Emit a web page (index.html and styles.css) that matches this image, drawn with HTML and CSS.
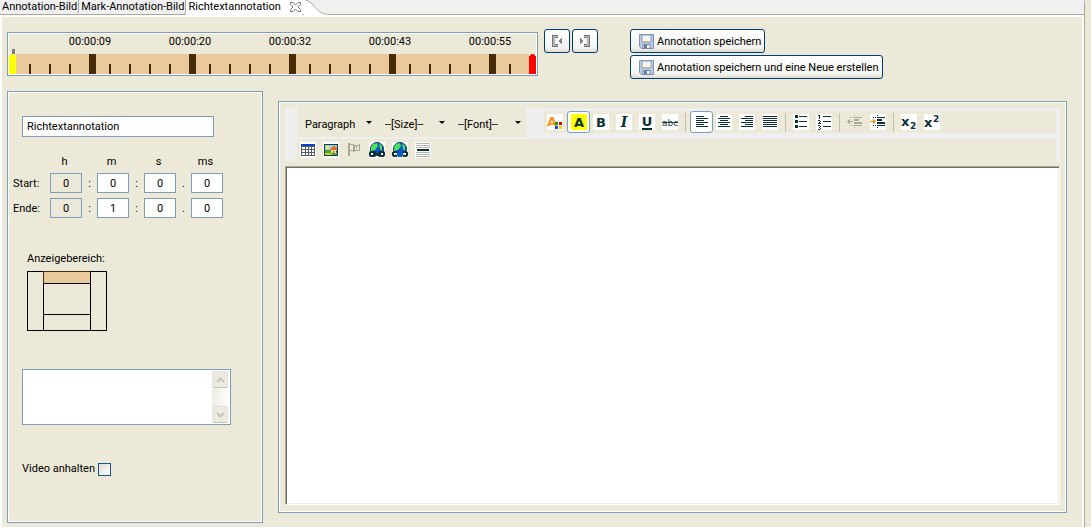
FILE: index.html
```html
<!DOCTYPE html>
<html lang="de">
<head>
<meta charset="utf-8">
<title>Richtextannotation</title>
<link rel="stylesheet" href="styles.css">
</head>
<body>
<div class="window">
<div class="view">
  <nav class="tabs">
    <button class="tab" type="button">Annotation-Bild</button>
    <button class="tab" type="button">Mark-Annotation-Bild</button>
    <button class="tab tab-active" type="button">Richtextannotation
      <svg class="tab-close" width="11" height="10" viewBox="0 0 11 10"><path d="M.5.5h2.500l2.500 2.500L8 .5h2.500v2L8 5l2.500 2.500v2H8L5.500 7 3 9.500H.5v-2L3 5 .5 2.500z" fill="#fff" stroke="#77756a"/></svg>
    </button>
    <svg class="tab-curve" width="28" height="15" viewBox="0 0 28 15"><path d="M0 0h2C10 2 12 14 26 14h2v1H0z" fill="#fff"/><path d="M1 0C10 1 12 14 24 14.500h4" fill="none" stroke="#aca899"/></svg>
  </nav>

  <main class="content">
    <div class="top">
      <div class="timeline">
        <div class="times"><span>00:00:09</span><span>00:00:20</span><span>00:00:32</span><span>00:00:43</span><span>00:00:55</span></div>
        <svg class="ruler" width="527" height="25" viewBox="0 0 527 25" shape-rendering="crispEdges">
          <path d="M0 5h527v20H0z" fill="#eac99a"/>
          <path d="M80 5h7v20h-7zM180 5h7v20h-7zM280 5h7v20h-7zM380 5h7v20h-7zM480 5h7v20h-7z" fill="#472a08"/>
          <path d="M21 15v10M41 15v10M61 15v10M101 15v10M121 15v10M141 15v10M161 15v10M201 15v10M221 15v10M241 15v10M261 15v10M301 15v10M321 15v10M341 15v10M361 15v10M401 15v10M421 15v10M441 15v10M461 15v10M501 15v10" stroke="#472a08" stroke-width="2"/>
          <path d="M0 5h7v20H0z" fill="#ece9d8"/><path d="M3 0h3v5H3z" fill="#808080"/>
          <path d="M0 25V7h1V6h1V5h3v1h1v1h1v18z" fill="#ff0"/>
          <path d="M520 5h7v2h-7z" fill="#ece9d8"/><path d="M520 25V7h1V6h1V5h3v1h1v1h1v18z" fill="#f00"/>
        </svg>
      </div>
      <div class="marks">
        <button class="btn btn-mark" type="button" aria-label="Start setzen"><svg width="12" height="14" viewBox="0 0 12 14" shape-rendering="crispEdges"><path d="M1 1h6v12H1z" fill="#b4b4b4"/><path d="M4 4h3v6H4z" fill="#f6f6f3"/><path d="M7 1.500H1.500v11H7M7 3.500H4M7 10.500H4" fill="none" stroke="#777"/><path d="M10 4h1v6h-1zM9 5h1v4H9zM8 6h1v2H8z" fill="#808080"/></svg></button>
        <button class="btn btn-mark" type="button" aria-label="Ende setzen"><svg width="12" height="14" viewBox="0 0 12 14" shape-rendering="crispEdges"><path d="M5 1h6v12H5z" fill="#b4b4b4"/><path d="M5 4h3v6H5z" fill="#f6f6f3"/><path d="M5 1.500h5.500v11H5M5 3.500h3M5 10.500h3" fill="none" stroke="#777"/><path d="M1 4h1v6H1zM2 5h1v4H2zM3 6h1v2H3z" fill="#808080"/></svg></button>
      </div>
      <div class="saves">
        <button class="btn btn-save" type="button"><svg width="15" height="15" viewBox="0 0 15 15"><path d="M.5.5h14v14h-12l-2-2z" fill="#b9cae8" stroke="#7d92b4"/><path d="M3 1h9v7H3z" fill="#f3f6f3" stroke="#8e9fb0"/><path d="M4 7.500h7M4 14.500v-4h7v4z" fill="#f4f4f0" stroke="#7889a4"/><path d="M4 7.500h7" stroke="#d8bd75"/><path d="M5 11h3v3H5z" fill="#667b9d"/></svg><span>Annotation speichern</span></button>
        <button class="btn btn-save" type="button"><svg width="15" height="15" viewBox="0 0 15 15"><path d="M.5.5h14v14h-12l-2-2z" fill="#b9cae8" stroke="#7d92b4"/><path d="M3 1h9v7H3z" fill="#f3f6f3" stroke="#8e9fb0"/><path d="M4 7.500h7M4 14.500v-4h7v4z" fill="#f4f4f0" stroke="#7889a4"/><path d="M4 7.500h7" stroke="#d8bd75"/><path d="M5 11h3v3H5z" fill="#667b9d"/></svg><span>Annotation speichern und eine Neue erstellen</span></button>
      </div>
    </div>

    <div class="panels">
      <form class="panel side">
        <input class="field title" type="text" value="Richtextannotation" aria-label="Titel">
        <div class="time-grid">
          <span></span><span class="unit">h</span><span></span><span class="unit">m</span><span></span><span class="unit">s</span><span></span><span class="unit">ms</span>
          <label for="start-h">Start:</label><input id="start-h" class="field num" value="0" disabled><span class="sep">:</span><input class="field num" value="0" aria-label="Start m"><span class="sep">:</span><input class="field num" value="0" aria-label="Start s"><span class="sep">.</span><input class="field num" value="0" aria-label="Start ms">
          <label for="end-h">Ende:</label><input id="end-h" class="field num" value="0" disabled><span class="sep">:</span><input class="field num" value="1" aria-label="Ende m"><span class="sep">:</span><input class="field num" value="0" aria-label="Ende s"><span class="sep">.</span><input class="field num" value="0" aria-label="Ende ms">
        </div>
        <div class="area">
          <span>Anzeigebereich:</span>
          <svg width="80" height="60" viewBox="0 0 80 60" shape-rendering="crispEdges"><path d="M.5.5h79v59H.5zM16.500.5v59M63.500.5v59M16.500 12.500h47M16.500 43.500h47" fill="none" stroke="#000"/><path d="M17 1h46v11H17z" fill="#eac99a"/><path d="M16.500 12V.5H63" fill="none" stroke="#472a08"/></svg>
        </div>
        <div class="note">
          <textarea class="note-text" aria-label="Notiz"></textarea>
          <div class="scroll">
            <button class="scroll-btn" type="button" aria-label="Nach oben"><svg width="9" height="6" viewBox="0 0 9 6"><path d="M1 5l3.500-3.500L8 5" fill="none" stroke="#c6c4b8" stroke-width="2"/></svg></button>
            <button class="scroll-btn" type="button" aria-label="Nach unten"><svg width="9" height="6" viewBox="0 0 9 6"><path d="M1 1l3.500 3.500L8 1" fill="none" stroke="#c6c4b8" stroke-width="2"/></svg></button>
          </div>
        </div>
        <label class="check-row">Video anhalten <input class="check" type="checkbox"></label>
      </form>

      <section class="panel editor">
        <div class="toolbars">
          <div class="bar-row">
            <div class="combos">
              <span class="combo combo-p"><select aria-label="Absatz"><option>Paragraph</option></select></span>
              <span class="combo combo-s"><select aria-label="Size"><option>--[Size]--</option></select></span>
              <span class="combo combo-f"><select aria-label="Font"><option>--[Font]--</option></select></span>
            </div>
            <div class="tools">
              <button class="tool" type="button" aria-label="Textfarbe"><svg class="ic" viewBox="0 0 16 16"><text x="0" y="12" class="glyph orange">A</text><g shape-rendering="crispEdges"><path d="M8 8h3v3H8z" fill="#0a9a0a"/><path d="M12 8h3v3h-3z" fill="#e00"/><path d="M8 12h3v3H8z" fill="#05e"/><path d="M12 12h3v3h-3z" fill="#fc0"/></g></svg></button>
              <button class="tool tool-on" type="button" aria-label="Hintergrundfarbe"><svg class="ic ic-yellow" viewBox="0 0 16 16"><text x="8" y="13" class="glyph mid">A</text></svg></button>
              <button class="tool" type="button" aria-label="Fett"><svg class="ic" viewBox="0 0 16 16"><text x="8" y="13" class="glyph mid">B</text></svg></button>
              <button class="tool" type="button" aria-label="Kursiv"><svg class="ic" viewBox="0 0 16 16"><text x="8" y="13" class="glyph mid italic">I</text></svg></button>
              <button class="tool" type="button" aria-label="Unterstrichen"><svg class="ic" viewBox="0 0 16 16"><text x="8" y="12" class="glyph mid">U</text><path d="M3 14h10v2H3z" fill="#0b3033"/></svg></button>
              <button class="tool" type="button" aria-label="Durchgestrichen"><svg class="ic" viewBox="0 0 16 16"><text x="8" y="12" class="glyph mid strike">abc</text><path d="M0 8.500h16" stroke="#26474a"/></svg></button>
              <span class="divider"></span>
              <button class="tool tool-on" type="button" aria-label="Linksbündig"><svg class="ic" viewBox="0 0 16 16"><path class="ln" d="M2 2.500h8M2 4.500h12M2 6.500h8M2 8.500h12M2 10.500h8M2 12.500h12"/></svg></button>
              <button class="tool" type="button" aria-label="Zentriert"><svg class="ic" viewBox="0 0 16 16"><path class="ln" d="M4 2.500h8M2 4.500h12M4 6.500h8M2 8.500h12M4 10.500h8M2 12.500h12"/></svg></button>
              <button class="tool" type="button" aria-label="Rechtsbündig"><svg class="ic" viewBox="0 0 16 16"><path class="ln" d="M6 2.500h8M2 4.500h12M6 6.500h8M2 8.500h12M6 10.500h8M2 12.500h12"/></svg></button>
              <button class="tool" type="button" aria-label="Blocksatz"><svg class="ic" viewBox="0 0 16 16"><path class="ln" d="M1 2.500h14M1 4.500h14M1 6.500h14M1 8.500h14M1 10.500h14M1 12.500h14"/></svg></button>
              <span class="divider"></span>
              <button class="tool" type="button" aria-label="Liste"><svg class="ic" viewBox="0 0 16 16"><path class="ln" d="M6 2.500h8M6 7.500h8M6 12.500h8"/><path d="M2 1h3v3H2zM2 6h3v3H2zM2 11h3v3H2z" fill="#0b3033"/></svg></button>
              <button class="tool" type="button" aria-label="Nummerierung"><svg class="ic" viewBox="0 0 16 16"><path class="ln" d="M7 2.500h8M7 7.500h8M7 12.500h8M2 1.500h2M3.500 1v4M2 6.500h2M4.500 7v1M3.500 8v1M2 9.500h3M2 11.500h2M4.500 12v1M3 13.500h1M4.500 14v1M2 15.500h2"/></svg></button>
              <span class="divider"></span>
              <button class="tool" type="button" aria-label="Ausrücken" disabled><svg class="ic ic-clear" viewBox="0 0 16 16" shape-rendering="crispEdges"><path d="M0 7h6v1H0zM1 6h1v3H1zM2 5h1v5H2z" fill="#aca899"/><path d="M7 1h1v1H7zM7 13h1v1H7zM3 3h1v1H3zM5 3h1v1H5zM7 3h8v1H7zM7 5h5v2H7zM7 8h8v2H7zM3 11h1v1H3zM5 11h1v1H5zM7 11h8v1H7z" fill="#aca899"/></svg></button>
              <button class="tool" type="button" aria-label="Einrücken"><svg class="ic" viewBox="0 0 16 16" shape-rendering="crispEdges"><path d="M0 7h6v1H0zM3 5h1v5H3zM4 6h1v3H4z" fill="#f7941d"/><path d="M7 1h1v1H7zM7 13h1v1H7zM3 3h1v1H3zM5 3h1v1H5zM7 3h8v1H7zM7 5h5v2H7zM7 8h8v2H7zM3 11h1v1H3zM5 11h1v1H5zM7 11h8v1H7z" fill="#0b3033"/></svg></button>
              <span class="divider"></span>
              <button class="tool" type="button" aria-label="Tiefgestellt"><svg class="ic" viewBox="0 0 16 16"><text x="0" y="12" class="glyph">x</text><text x="9" y="15" class="glyph small">2</text></svg></button>
              <button class="tool" type="button" aria-label="Hochgestellt"><svg class="ic" viewBox="0 0 16 16"><text x="0" y="13" class="glyph">x</text><text x="9" y="8" class="glyph small">2</text></svg></button>
            </div>
          </div>
          <div class="tools tools-second">
            <button class="tool" type="button" aria-label="Tabelle"><svg class="ic" viewBox="0 0 16 16" shape-rendering="crispEdges"><path d="M1 2h14v12H1z" fill="#555b60"/><path d="M1 2h14v2H1z" fill="#0b45c4"/><path d="M2 5h3v2H2zM6 5h2v2H6zM9 5h2v2H9zM12 5h2v2h-2zM2 8h3v2H2zM6 8h2v2H6zM9 8h2v2H9zM12 8h2v2h-2zM2 11h3v2H2zM6 11h2v2H6zM9 11h2v2H9zM12 11h2v2h-2z" fill="#fff"/></svg></button>
            <button class="tool" type="button" aria-label="Bild"><svg class="ic" viewBox="0 0 16 16" shape-rendering="crispEdges"><path d="M1 2h14v12H1z" fill="#173f42"/><path d="M2 3h12v6H2z" fill="#8fd0ec"/><path d="M2 8h5l2 2h5v3H2z" fill="#52a536"/><path d="M2 11h5l3 2H2z" fill="#b5dc2c"/><path d="M3 4h3v3H3z" fill="#ffe94a"/><path d="M7 7l3-3h1l3 3v1H7z" fill="#f26a18"/><path d="M8 8h5v3H8z" fill="#f8d49b"/><path d="M10 9h1v2h-1z" fill="#a8501e"/></svg></button>
            <button class="tool" type="button" aria-label="Anker" disabled><svg class="ic ic-clear" viewBox="0 0 16 16" shape-rendering="crispEdges"><path d="M2 1h2v13H2zM4 2h4v1H4zM4 8h4v1H4zM7 3h2v7H7zM9 3h4v1H9zM13 2h1v7h-1zM9 8h4v1H9zM10 4h1v3h-1z" fill="#aca899"/></svg></button>
            <button class="tool" type="button" aria-label="Link einfügen"><svg class="ic" viewBox="0 0 16 16"><circle cx="8" cy="7" r="6.500" fill="#0c55c8" stroke="#0b3567"/><path d="M4 2l4-1 1 3-3 4-4 1V5zM10 1l3 3v5l-2-2z" fill="#4fe05a"/><rect x="1" y="10" width="5" height="4" rx="1" fill="#fff" stroke="#0b3033" stroke-width="2"/><rect x="10" y="10" width="5" height="4" rx="1" fill="#fff" stroke="#0b3033" stroke-width="2"/><path d="M4 12h8" stroke="#0b3033" stroke-width="2"/></svg></button>
            <button class="tool" type="button" aria-label="Link entfernen"><svg class="ic" viewBox="0 0 16 16"><circle cx="8" cy="7" r="6.500" fill="#0c55c8" stroke="#0b3567"/><path d="M4 2l4-1 1 3-3 4-4 1V5zM10 1l3 3v5l-2-2z" fill="#4fe05a"/><path d="M6 8h4v7H6z" fill="#0c55c8"/><path d="M5 10H2l-1 1v2l1 1h2l1-1M11 10h3l1 1v2l-1 1h-2l-1-1" fill="#fff" stroke="#0b3033" stroke-width="2"/></svg></button>
            <button class="tool" type="button" aria-label="Trennlinie"><svg class="ic" viewBox="0 0 16 16" shape-rendering="crispEdges"><path d="M1 1.500h14M1 3.500h14M1 5.500h14M1 10.500h14M1 12.500h14M1 14.500h14" stroke="#b5b5b5"/><path d="M2 7h12v2H2z" fill="#0b3033"/></svg></button>
          </div>
        </div>
        <textarea class="doc" aria-label="Text"></textarea>
      </section>
    </div>
  </main>
</div>
</div>
</body>
</html>
```
FILE: styles.css
```css
* { box-sizing: border-box; }
body { margin: 0; background: #fff; color: #000; }
body, button, input, select, textarea {
  font-family: Roboto, "Noto Sans", sans-serif;
  font-size: 11px;
  line-height: 14px;
}
button, select, textarea, input { margin: 0; color: #000; border-radius: 0; }
svg { display: block; flex: none; }

.window {
  display: flex;
  height: calc(100vh - 5px);
  min-height: 500px;
  margin-right: 1px;
  padding-right: 6px;
  background: #ece9d8;
}
.view {
  flex: 1;
  display: flex;
  flex-direction: column;
  min-width: 0;
  border-right: 1px solid #aca899;
  border-top-right-radius: 3px;
  background: #fff;
}

/* Tabs */
.tabs {
  display: flex;
  height: 15px;
  background: #f0f0f0;
  border-bottom: 1px solid #aca899;
  border-top-right-radius: 3px;
}
.tab {
  height: 14px;
  padding: 0 1px 0 2px;
  border: 0;
  border-right: 1px solid #aca899;
  border-bottom-right-radius: 3px;
  background: transparent;
  white-space: nowrap;
}
.tab-active {
  display: flex;
  gap: 9px;
  height: 15px;
  padding: 0 3px 0 2px;
  border: 0;
  background: #fff;
}
.tab-close { margin-top: 2px; }
.tab-curve { height: 15px; }

.content {
  flex: 1;
  display: flex;
  flex-direction: column;
  min-height: 0;
  margin: 2px 2px 0 2px;
  padding: 12px 15px 4px 5px;
  background: #ece9d8;
}

/* Timeline and actions */
.top { display: flex; height: 62px; }
.timeline {
  align-self: flex-start;
  width: 531px;
  margin-top: 3px;
  border: 1px solid #7f9db9;
  padding: 1px;
  background: #ece9d8;
  box-shadow: inset 0 0 0 1px #fff;
}
.times { display: flex; padding: 1px 0 0 31px; height: 15px; }
.times span { flex: none; width: 100px; text-align: center; }
.marks { display: flex; gap: 2px; margin-left: 6px; }
.saves { display: flex; flex-direction: column; align-items: flex-start; gap: 2px; margin-left: 32px; }
.btn {
  display: flex;
  align-items: center;
  height: 24px;
  border: 1px solid #003c74;
  border-radius: 3px;
  background: linear-gradient(#fff, #f3f3ef 80%, #dddbd2);
}
.btn-mark { width: 26px; justify-content: center; padding: 0; }
.btn-save { gap: 3px; padding: 0 3px 0 8px; white-space: nowrap; }
.btn-save span { padding-top: 2px; }

/* Panels */
.panels { flex: 1; display: flex; gap: 15px; min-height: 0; }
.panel { border: 1px solid #7f9db9; box-shadow: inset 0 0 0 1px #fff; }
.side { width: 256px; flex: none; padding: 24px 14px 0 5px; }
.field { border: 1px solid #7f9db9; background: #fff; }
.title { display: block; width: 192px; height: 21px; margin-left: 9px; padding: 0 4px; }
.time-grid {
  display: grid;
  grid-template-columns: 37px 32px 15px 32px 15px 32px 15px 32px;
  grid-template-rows: 18px 20px 20px;
  row-gap: 5px;
  align-items: center;
  margin-top: 13px;
}
.time-grid label, .sep { padding-top: 2px; }
.unit, .sep { text-align: center; }
.unit { padding: 6px 3px 0 0; }
.num { width: 32px; height: 20px; padding: 0; text-align: center; }
.num:disabled { background: #ece9d8; color: #000; }
.area { display: flex; flex-direction: column; gap: 5px; margin: 34px 0 0 14px; }
.note {
  display: flex;
  width: 209px;
  height: 56px;
  margin: 38px 0 0 9px;
  padding: 1px;
  border: 1px solid #7f9db9;
  background: #fff;
}
.note-text { flex: 1; min-width: 0; padding: 2px; border: 0; resize: none; background: #fff; }
.scroll {
  display: flex;
  flex-direction: column;
  justify-content: space-between;
  width: 17px;
  padding: 0 1px;
  background: linear-gradient(90deg, #eeede5, #fefefb);
}
.scroll-btn {
  display: flex;
  align-items: center;
  justify-content: center;
  width: 15px;
  height: 17px;
  padding: 0;
  border: 1px solid #e4e2d6;
  border-bottom-color: #c6c3ae;
  border-radius: 2px;
  background: #ecebe3;
}
.check-row { display: flex; align-items: center; gap: 3px; margin: 37px 0 0 9px; }
.check {
  appearance: none;
  width: 13px;
  height: 13px;
  border: 1px solid #1c5180;
  background: linear-gradient(135deg, #dcdcd7, #fff);
}

/* Editor */
.editor {
  flex: 1;
  display: flex;
  flex-direction: column;
  gap: 5px;
  min-width: 0;
  margin: 10px 0;
  padding: 6px 6px 7px;
}
.toolbars { padding: 0 4px 0 12px; background: #efefef; }
.bar-row { display: flex; gap: 18px; height: 31px; padding-bottom: 2px; }
.combos { display: flex; background: #ece9d8; }
.combo { position: relative; display: flex; padding-top: 4px; }
.combo::after {
  content: "";
  position: absolute;
  right: 5px;
  top: 13px;
  border: 3px solid transparent;
  border-top-color: #000;
  border-bottom: 0;
}
.combo-p { width: 80px; }
.combo-s { width: 73px; }
.combo-f { width: 76px; }
.combo select { appearance: none; width: 100%; padding: 0 12px 0 8px; border: 0; background: transparent; }
.tools { display: flex; align-items: center; background: #ece9d8; }
.bar-row .tools { flex: 1; height: 22px; margin-top: 3px; }
.tools-second { height: 22px; }
.tool {
  display: flex;
  align-items: center;
  justify-content: center;
  width: 23px;
  height: 22px;
  padding: 0 1px 0 0;
  border: 1px solid transparent;
  background: transparent;
}
.tool-on { padding: 0; border-color: #7f9db9; border-radius: 3px; background: #fff; }
.divider { width: 1px; height: 19px; margin: 0 4px 0 3px; background: #c5c2ac; }
.ic { width: 16px; height: 16px; background: #fff; }
.ic-yellow { background: #ff0; }
.ic-clear { background: transparent; }
.ln { fill: none; stroke: #0b3033; shape-rendering: crispEdges; }
.glyph { font: bold 13px "DejaVu Sans", sans-serif; fill: #0b3033; }
.mid { text-anchor: middle; }
.glyph.orange { fill: #f7941d; }
.glyph.italic { font: italic bold 14px "DejaVu Serif", serif; }
.glyph.strike { font-size: 9px; font-weight: normal; fill: #26474a; }
.glyph.small { font-size: 9px; }
.doc {
  flex: 1;
  width: 100%;
  padding: 4px;
  border: 1px solid;
  border-color: #aca899 #fff #fff #aca899;
  box-shadow: inset 1px 1px 0 #716f64, inset -1px -1px 0 #f1efe2;
  background: #fff;
  resize: none;
}
```
